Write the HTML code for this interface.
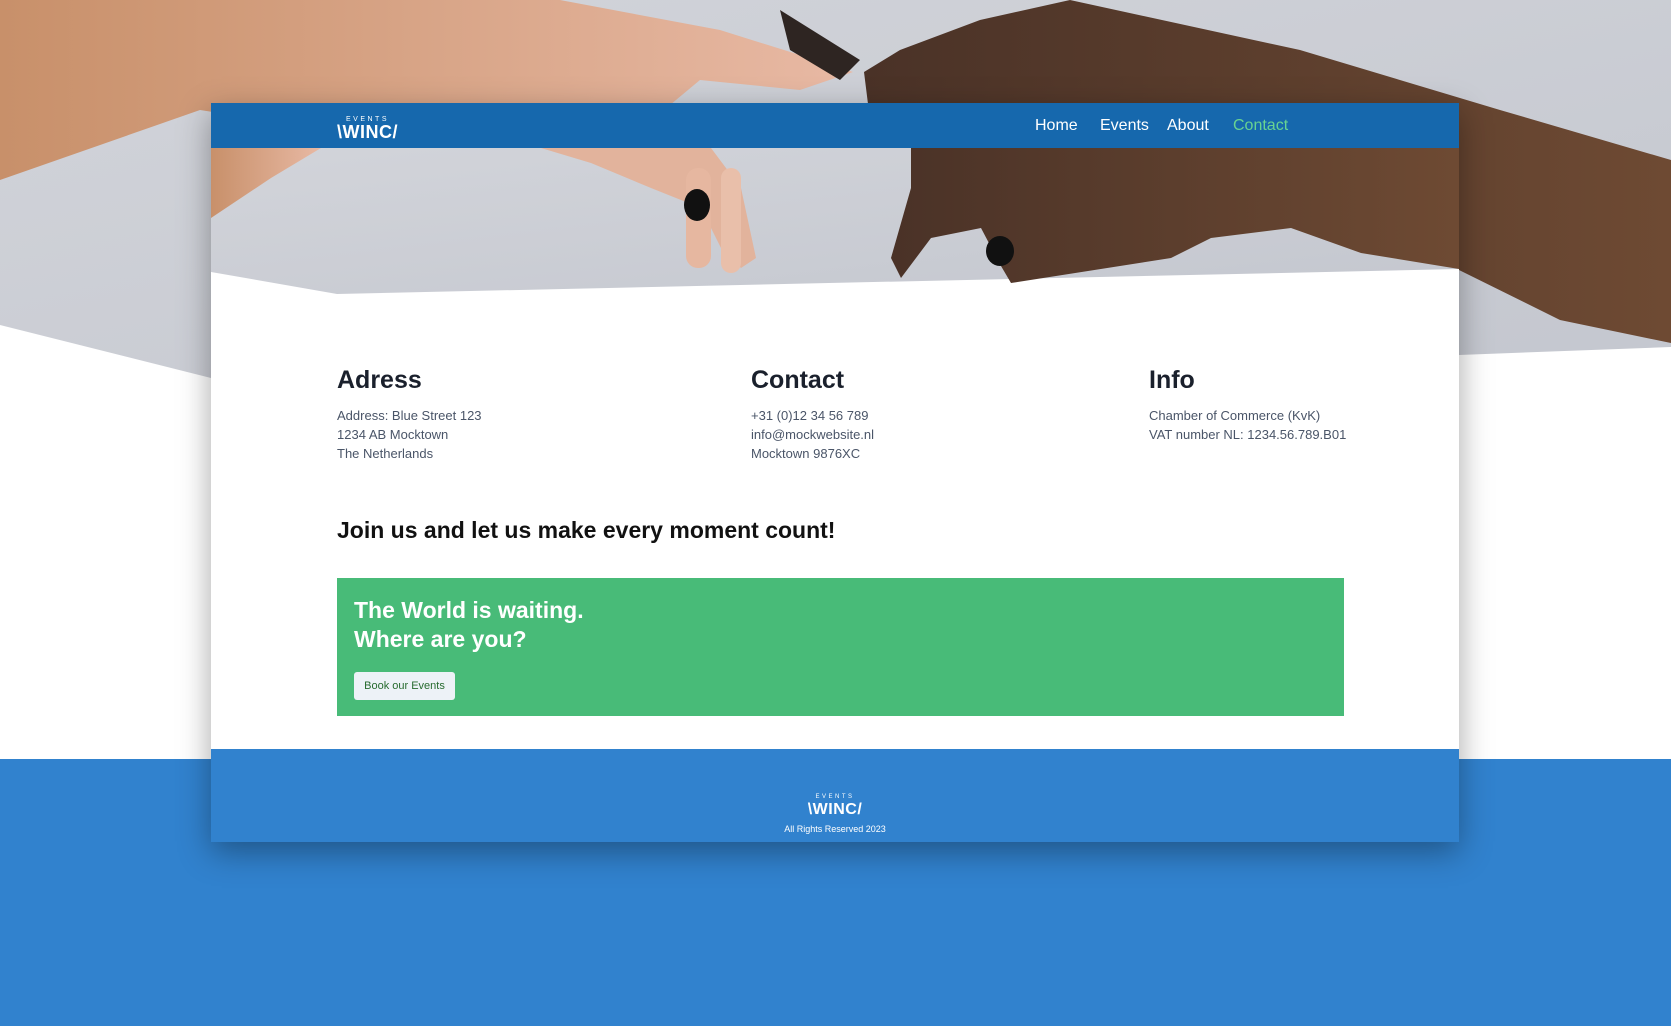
<!DOCTYPE html>
<html><head><meta charset="utf-8"><style>
*{margin:0;padding:0;box-sizing:border-box}
body{width:1671px;height:1026px;overflow:hidden;background:#fff;font-family:"Liberation Sans",sans-serif;position:relative}
.abs{position:absolute}
.card{left:211px;top:103px;width:1248px;height:739px;background:#fff;box-shadow:0 10px 30px rgba(0,0,0,.35)}
.nav{left:211px;top:103px;width:1248px;height:45px;background:#1668ad}
.nav a{position:absolute;top:14px;color:#fff;font-size:16px;text-decoration:none}
.logo{color:#fff;text-align:center}
.logo .e{font-size:7px;letter-spacing:2.5px;line-height:7px}
.logo .w{font-size:18px;font-weight:bold;line-height:18px;letter-spacing:.5px}
h2{position:absolute;top:366px;font-size:25px;color:#1a202c;font-weight:bold}
.t{position:absolute;top:406px;font-size:13px;line-height:19px;color:#4a5568}
</style></head><body>
<svg class="abs" style="left:0;top:0" width="1671" height="1026">
<defs><linearGradient id="g" x1="0" y1="0" x2="1" y2="1"><stop offset="0" stop-color="#d2d4da"/><stop offset="1" stop-color="#c4c7cf"/></linearGradient>
<linearGradient id="lh" x1="0" y1="0" x2="1" y2="0"><stop offset="0" stop-color="#c8906a"/><stop offset="1" stop-color="#e8b9a4"/></linearGradient>
<linearGradient id="dh" x1="0" y1="0" x2="1" y2="0"><stop offset="0" stop-color="#4a3227"/><stop offset="1" stop-color="#6e4a33"/></linearGradient></defs>
<polygon points="0,0 1671,0 1671,347 1459,355 211,378 0,325" fill="url(#g)"/>
<polygon points="0,0 560,0 720,30 800,55 853,72 800,90 700,80 640,130 600,150 520,140 330,130 200,110 0,180" fill="url(#lh)"/>
<polygon points="780,10 860,60 840,80 790,50" fill="#2e2522"/>
<polygon points="1070,0 1300,50 1500,110 1671,160 1671,343 1560,320 1459,270 1300,230 1150,240 1000,275 960,250 900,200 870,120 864,72 900,50 980,20" fill="url(#dh)"/>
<rect x="0" y="759" width="1671" height="267" fill="#3182ce"/>
</svg>
<div class="abs card"></div>
<svg class="abs" style="left:211px;top:148px" width="1248" height="150">
<polygon points="0,0 1248,0 1248,121 126,146 0,124" fill="url(#g)"/>
<polygon points="0,0 110,0 60,30 0,70" fill="url(#lh)"/>
<polygon points="330,0 500,0 530,40 545,110 530,120 510,100 490,60 440,40 380,15" fill="#e2b39c"/>
<rect x="475" y="20" width="25" height="100" rx="12" fill="#e6b7a0"/>
<rect x="510" y="20" width="20" height="105" rx="10" fill="#e9bfaa"/>
<ellipse cx="486" cy="57" rx="13" ry="16" fill="#111"/>
<polygon points="700,0 1248,0 1248,121 1150,105 1080,80 1000,90 960,110 800,135 790,118 770,80 720,90 690,130 680,110 700,40" fill="url(#dh)"/>
<ellipse cx="789" cy="103" rx="14" ry="15" fill="#111"/>
</svg>
<div class="abs nav">
<div class="abs logo" style="left:126px;top:13px"><div class="e">EVENTS</div><div class="w">\WINC/</div></div>
<a style="left:824px">Home</a><a style="left:889px">Events</a><a style="left:956px">About</a><a style="left:1022px;color:#68d391">Contact</a>
</div>
<h2 style="left:337px">Adress</h2><h2 style="left:751px">Contact</h2><h2 style="left:1149px">Info</h2>
<div class="t" style="left:337px">Address: Blue Street 123<br>1234 AB Mocktown<br>The Netherlands</div>
<div class="t" style="left:751px">+31 (0)12 34 56 789<br>info@mockwebsite.nl<br>Mocktown 9876XC</div>
<div class="t" style="left:1149px">Chamber of Commerce (KvK)<br>VAT number NL: 1234.56.789.B01</div>
<div class="abs" style="left:337px;top:517px;font-size:23px;font-weight:bold;color:#111">Join us and let us make every moment count!</div>
<div class="abs" style="left:337px;top:578px;width:1007px;height:138px;background:#48bb78">
<div class="abs" style="left:17px;top:18px;color:#fff;font-size:23px;font-weight:bold;line-height:29px">The World is waiting.<br>Where are you?</div>
<div class="abs" style="left:17px;top:94px;width:101px;height:28px;background:#edf2f7;border-radius:3px;color:#276b2f;font-size:11px;text-align:center;line-height:28px">Book our Events</div>
</div>
<div class="abs" style="left:211px;top:749px;width:1248px;height:93px;background:#3182ce">
<div class="abs logo" style="left:0;width:1248px;top:45px"><div class="e" style="font-size:6px">EVENTS</div><div class="w" style="font-size:16px">\WINC/</div><div style="font-size:9px;margin-top:5px">All Rights Reserved 2023</div></div>
</div>
</body></html>
